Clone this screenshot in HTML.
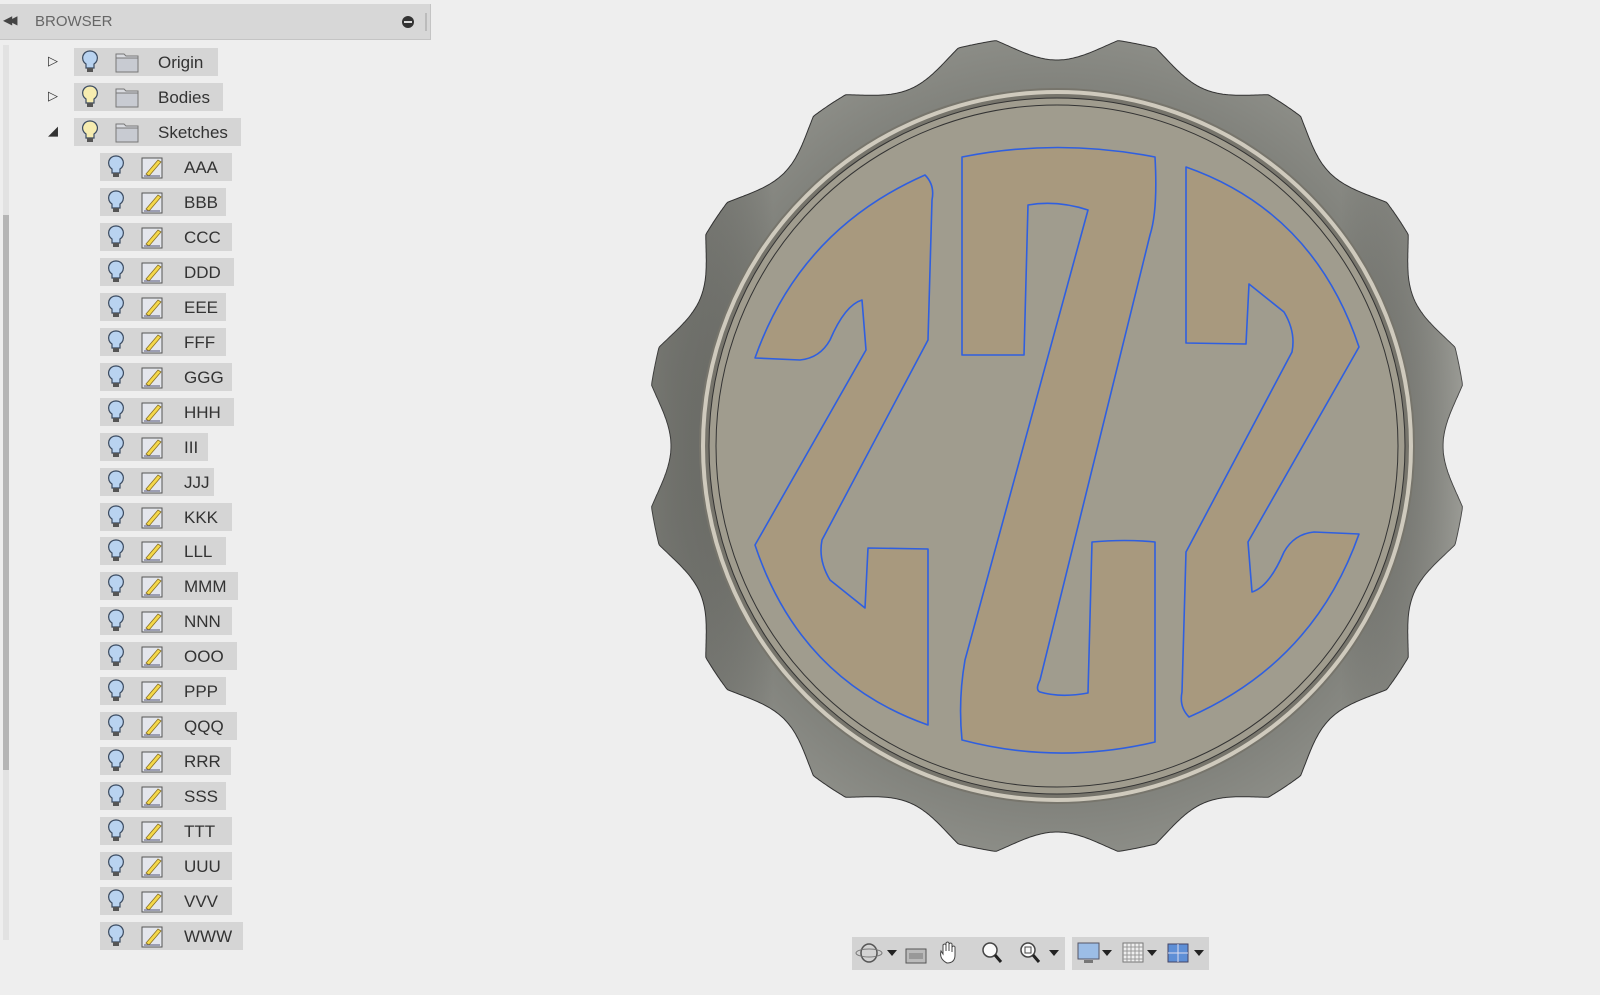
<!DOCTYPE html>
<html><head><meta charset="utf-8"><style>
html,body{margin:0;padding:0;width:1600px;height:995px;overflow:hidden;background:#eeeeee;font-family:"Liberation Sans",sans-serif;}
#hdr{position:absolute;left:0;top:4px;width:430px;height:35px;background:#d7d7d7;border-bottom:1px solid #c4c4c4;border-right:1px solid #c4c4c4;}
#hdr .t{position:absolute;left:35px;top:9px;font-size:15px;color:#666;}
#hdr .a{position:absolute;left:3px;top:9px;font-size:12px;color:#444;letter-spacing:-4px}
#hdr .m{position:absolute;left:402px;top:12px;width:12px;height:12px;border-radius:50%;background:#333}
#hdr .m:after{content:"";position:absolute;left:2px;top:5px;width:8px;height:2px;background:#ddd}
#hdr .b{position:absolute;left:425px;top:9px;width:2px;height:18px;background:#bbb}
#sb{position:absolute;left:3px;top:45px;width:6px;height:895px;background:#e2e2e2}
#sb2{position:absolute;left:3px;top:215px;width:6px;height:555px;background:#b5b5b5}
.row{position:absolute;height:28px;background:#d5d5d5;}
.row span{position:absolute;top:5px;font-size:17px;color:#333}
.tri{position:absolute;left:48px;font-size:13px;color:#333}
#tb1{position:absolute;left:852px;top:937px;width:213px;height:33px;background:#d3d3d3}
#tb2{position:absolute;left:1072px;top:937px;width:137px;height:33px;background:#d3d3d3}
</style></head><body>
<div id="hdr"><span class="a">◀◀</span><span class="t">BROWSER</span><div class="m"></div><div class="b"></div></div>
<div id="sb"></div><div id="sb2"></div>
<div id="rows"></div>
<svg width="1600" height="995" style="position:absolute;left:0;top:0" id="g">
<defs>
<radialGradient id="gr" cx="1057" cy="446" r="412" gradientUnits="userSpaceOnUse">
<stop offset="0.85" stop-color="#80817b"/><stop offset="1" stop-color="#8c8d87"/></radialGradient>
<linearGradient id="lg" x1="0" y1="0" x2="1" y2="0">
<stop offset="0" stop-color="#5f605b" stop-opacity=".5"/><stop offset=".15" stop-color="#000" stop-opacity="0"/><stop offset=".85" stop-color="#000" stop-opacity="0"/><stop offset="1" stop-color="#b0b0aa" stop-opacity=".4"/></linearGradient>
</defs>
<path id="gear" fill="url(#gr)" stroke="#333" stroke-width="1"/>
<path id="gear2" fill="url(#lg)"/>
<circle cx="1057" cy="446" r="358" fill="#77756c"/>
<circle cx="1057" cy="446" r="354" fill="none" stroke="#cfcabd" stroke-width="4"/>
<circle cx="1057" cy="446" r="348" fill="#a09c8e" stroke="#333" stroke-width="1"/>
<circle cx="1057" cy="446" r="341" fill="none" stroke="#333" stroke-width="1"/>
<g fill="#a8997e" stroke="#2f5fe0" stroke-width="1.6" stroke-linejoin="round">
<path id="L" d="M925,175 Q935,185 932,200 L928,340 L822,540 Q818,560 830,580 L865,608 L868,548 L928,549 L928,725 Q800,680 755,545 L866,350 L862,300 Q845,305 830,340 Q820,358 800,360 L755,358 Q800,230 925,175 Z"/>
<use href="#L" transform="rotate(180 1057 446)"/>
<path d="M962,157 Q1057,138 1155,157 Q1158,210 1150,235 L1040,680 Q1035,690 1040,692 Q1060,698 1088,693 L1092,542 Q1125,539 1155,542 L1155,742 Q1057,765 962,740 Q958,700 965,660 L1088,210 Q1057,200 1028,205 L1024,355 L962,355 Z"/>
</g>
</svg>
<div id="tb1"><svg width="213" height="33">
<ellipse cx="17" cy="16" rx="8" ry="9" fill="none" stroke="#555" stroke-width="1.5"/><ellipse cx="17" cy="16" rx="13" ry="4" fill="none" stroke="#777"/>
<path d="M35 13h10l-5 6z" fill="#222"/>
<rect x="54" y="12" width="20" height="14" fill="#bbb" stroke="#555"/><rect x="57" y="16" width="14" height="6" fill="#999"/>
<path d="M95 26 q-8 -4 -6 -12 l2 3 v-9 q2-2 3 0 v6 v-8 q2-2 3 0 v8 v-7 q2-2 3 0 v8 v-5 q2-2 3 0 v8 q0 8 -8 8z" fill="#fff" stroke="#444"/>
<circle cx="138" cy="13" r="7" fill="#fafafa" stroke="#444" stroke-width="1.5"/><path d="M143 18l6 7" stroke="#222" stroke-width="3"/>
<circle cx="176" cy="13" r="7" fill="#fafafa" stroke="#444" stroke-width="1.5"/><rect x="173" y="10" width="6" height="6" fill="none" stroke="#444"/><path d="M181 18l6 7" stroke="#222" stroke-width="3"/>
<path d="M197 13h10l-5 6z" fill="#222"/></svg></div>
<div id="tb2"><svg width="137" height="33">
<rect x="6" y="6" width="21" height="16" fill="#9cbde6" stroke="#556"/><rect x="12" y="23" width="9" height="3" fill="#777"/>
<path d="M30 13h10l-5 6z" fill="#222"/>
<rect x="51" y="6" width="20" height="19" fill="#eee" stroke="#777"/><path d="M55 6v19M59 6v19M63 6v19M67 6v19M51 10h20M51 14h20M51 18h20M51 22h20" stroke="#999"/>
<path d="M75 13h10l-5 6z" fill="#222"/>
<rect x="96" y="7" width="20" height="18" fill="#5e8fd6" stroke="#446"/><path d="M106 7v18M96 16h20" stroke="#dde"/>
<path d="M122 13h10l-5 6z" fill="#222"/></svg></div>
<script>
var bulbB='<svg width="22" height="26" viewBox="0 0 22 26"><path d="M11 2 a7 7 0 0 1 4 13 v4 h-8 v-4 a7 7 0 0 1 4-13z" fill="#b9d3f0" stroke="#3a4a60" stroke-width="1.2"/><rect x="8" y="19" width="6" height="4" fill="#555"/></svg>';
var bulbY=bulbB.replace('#b9d3f0','#f6ecb0');
var fold='<svg width="26" height="24" viewBox="0 0 26 24"><path d="M2 4h8l2 2h12v16h-22z" fill="#d9dbe0" stroke="#777"/><rect x="2" y="8" width="22" height="14" fill="#c8cbd2" stroke="#777"/></svg>';
var sk='<svg width="24" height="24" viewBox="0 0 24 24"><rect x="2" y="3" width="20" height="20" fill="#e4e6ec" stroke="#555"/><path d="M6 19 L18 5 l3 2 -12 14z" fill="#f4d84a" stroke="#8a7020" stroke-width=".8"/><path d="M4 21h16" stroke="#557"/></svg>';
var top3=[['Origin',bulbB,218],['Bodies',bulbY,223],['Sketches',bulbY,241]];
var names=['AAA','BBB','CCC','DDD','EEE','FFF','GGG','HHH','III','JJJ','KKK','LLL','MMM','NNN','OOO','PPP','QQQ','RRR','SSS','TTT','UUU','VVV','WWW'];
var ws=[232,226,232,234,226,226,232,234,208,214,232,226,238,232,237,226,237,231,226,232,232,232,243];
var h='';
top3.forEach(function(r,i){var y=48+35*i;
h+='<div class="tri" style="top:'+(y+5)+'px">'+(i<2?'▷':'◢')+'</div>';
h+='<div class="row" style="left:74px;top:'+y+'px;width:'+(r[2]-74)+'px"><div style="position:absolute;left:5px;top:1px">'+r[1]+'</div><div style="position:absolute;left:40px;top:2px">'+fold+'</div><span style="left:84px">'+r[0]+'</span></div>';});
names.forEach(function(n,i){var y=153+34.95*i;
h+='<div class="row" style="left:100px;top:'+y+'px;width:'+(ws[i]-100)+'px"><div style="position:absolute;left:5px;top:1px">'+bulbB+'</div><div style="position:absolute;left:40px;top:2px">'+sk+'</div><span style="left:84px">'+n+'</span></div>';});
document.getElementById('rows').innerHTML=h;
var cx=1057,cy=446,d='',N=16,R=410,dep=24;
for(var k=0;k<=1440;k++){var t=k/1440*2*Math.PI;var ph=((t*N/(2*Math.PI))+0.5)%1; // notch at ph=0.5 -> t=0
var p=Math.min(1,Math.max(0,(ph-0.12)/0.76));
var r=R-dep*Math.sin(Math.PI*p);
var x=cx+r*Math.sin(t),y=cy-r*Math.cos(t);d+=(k?'L':'M')+x.toFixed(1)+','+y.toFixed(1);}
d+='Z';document.getElementById('gear').setAttribute('d',d);document.getElementById('gear2').setAttribute('d',d);
</script>
</body></html>
